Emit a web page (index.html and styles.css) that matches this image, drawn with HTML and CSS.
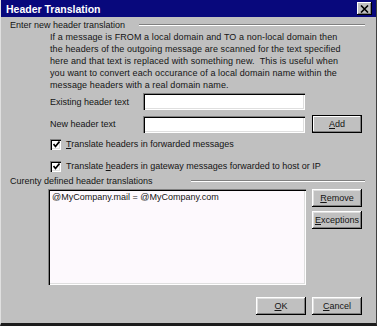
FILE: index.html
```html
<!doctype html>
<html lang="en">
<head>
	<meta charset="UTF-8">
	<title>Header Translation</title>
	<link rel="stylesheet" href="styles.css">
</head>
<body>
	<div class="dialog">
		<div class="titlebar">
			<span class="title">Header Translation</span>
			<span class="close">
				<svg width="9" height="8" viewBox="0 0 9 8"><path d="M1 0.5 L8 7.5 M8 0.5 L1 7.5" stroke="#000" stroke-width="1.6"/></svg>
			</span>
		</div>
		<div class="body">
			<div class="grouphead"><span>Enter new header translation</span><span class="etch"></span></div>
			<p class="info">If a message is FROM a local domain and TO a non-local domain then<br>
				the headers of the outgoing message are scanned for the text specified<br>
				here and that text is replaced with something new.&nbsp; This is useful when<br>
				you want to convert each occurance of a local domain name within the<br>
				message headers with a real domain name.</p>
			<div class="fields">
				<label>Existing header text</label>
				<span class="edit"></span>
				<span></span>
				<label>New header text</label>
				<span class="edit"></span>
				<button class="btn default"><u>A</u>dd</button>
			</div>
			<div class="checks">
				<div class="check">
					<span class="box"><svg width="7" height="7" viewBox="0 0 7 7"><path d="M0.5 3 L2.5 5.5 L6.5 0.5" fill="none" stroke="#000" stroke-width="1.7"/></svg></span>
					<span><u>T</u>ranslate headers in forwarded messages</span>
				</div>
				<div class="check">
					<span class="box"><svg width="7" height="7" viewBox="0 0 7 7"><path d="M0.5 3 L2.5 5.5 L6.5 0.5" fill="none" stroke="#000" stroke-width="1.7"/></svg></span>
					<span>Translate <u>h</u>eaders in gateway messages forwarded to host or IP</span>
				</div>
			</div>
			<div class="grouphead second"><span>Curenty defined header translations</span><span class="etch"></span></div>
			<div class="listarea">
				<div class="listbox">@MyCompany.mail = @MyCompany.com</div>
				<div class="side">
					<button class="btn"><u>R</u>emove</button>
					<button class="btn"><u>E</u>xceptions</button>
				</div>
			</div>
			<div class="footer">
				<button class="btn"><u>O</u>K</button>
				<button class="btn"><u>C</u>ancel</button>
			</div>
		</div>
	</div>
</body>
</html>
```

FILE: styles.css
```css
*{margin: 0;padding: 0;box-sizing: border-box;}
body{font-family: "Liberation Sans", Arial, sans-serif; font-size: 9px; color: #141414; background: #c0c0c0;}

.dialog{width: 377px; height: 326px; background: #c0c0c0; display: flex; flex-direction: column;
	border-left: 1px solid #e0e0e0; border-right: 1px solid #404040; border-bottom: 3px solid #1c1c1c;}

.titlebar{height: 17px; flex: none; background: #08087c; color: #fff; display: flex; align-items: center;
	justify-content: space-between; padding: 0 4px 0 5px; font-size: 10.5px; font-weight: bold;}
.close{width: 15px; height: 13px; background: #c0c0c0; display: flex; align-items: center; justify-content: center;
	box-shadow: inset -1px -1px #000, inset 1px 1px #fff, inset -2px -2px #808080;}
.close svg{display: block;}

.body{flex: 1; padding: 2px 14px 0 9px; display: flex; flex-direction: column;}

.grouphead{display: flex; align-items: center; gap: 14px; height: 12px;}
.grouphead.second{margin-top: 3px; gap: 38px;}
.etch{flex: 1; margin-right: -3px; border-top: 1px solid #808080; border-bottom: 1px solid #fff;}

.info{margin: 0 0 0 40px; line-height: 12px; letter-spacing: 0.1px;}

.fields{display: grid; grid-template-columns: 86px 162px 50px; column-gap: 7px; row-gap: 5px;
	margin: 2px 0 0 40px; align-items: center;}
.edit{height: 17px; background: #fff;
	box-shadow: inset 1px 1px #808080, inset 2px 2px #000, inset -1px -1px #fff, inset -2px -2px #dfdfdf;}

.btn{width: 50px; height: 18px; border: 0; font: inherit; color: #141414; background: #c0c0c0; cursor: pointer;
	box-shadow: inset -1px -1px #000, inset 1px 1px #fff, inset -2px -2px #808080, inset 2px 2px #dfdfdf;}
.btn.default{border: 1px solid #000; box-shadow: inset -1px -1px #808080, inset 1px 1px #fff;}

.checks{margin: 5px 0 0 40px; display: flex; flex-direction: column; gap: 10px;}
.check{display: flex; align-items: center; gap: 5px; height: 12px;}
.box{width: 11px; height: 11px; background: #fff; display: flex; align-items: center; justify-content: center;
	padding: 1px 0 0 1px;
	box-shadow: inset 1px 1px #808080, inset 2px 2px #000, inset -1px -1px #fff, inset -2px -2px #dfdfdf;}

.listarea{display: flex; gap: 6px; margin: 2px 0 0 38px;}
.listbox{width: 258px; height: 96px; background: #fdf9fd; padding: 3px 4px; line-height: 11px;
	box-shadow: inset 1px 1px #808080, inset 2px 2px #000, inset -1px -1px #fff, inset -2px -2px #dfdfdf;}
.side{display: flex; flex-direction: column; gap: 4px;}

.footer{display: flex; justify-content: flex-end; gap: 6px; margin-top: 12px;}
```
